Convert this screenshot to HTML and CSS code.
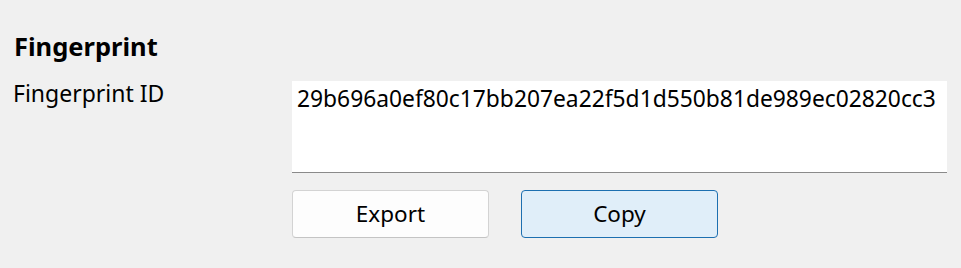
FILE: index.html
```html
<!DOCTYPE html>
<html lang="en">
<head>
    <meta charset="UTF-8">
    <title>Fingerprint</title>
    <link rel="stylesheet" href="styles.css">
</head>
<body>

<div class="panel">
    <div class="section-title">Fingerprint</div>

    <div class="field-row">
        <div class="field-label">Fingerprint ID</div>
        <div class="field-body">
            <div class="id-box">29b696a0ef80c17bb207ea22f5d1d550b81de989ec02820cc3</div>
            <div class="button-row">
                <button class="btn">Export</button>
                <button class="btn btn-accent">Copy</button>
            </div>
        </div>
    </div>
</div>

</body>
</html>
```

FILE: styles.css
```css
body {
    margin: 0;
    padding: 0;
    background-color: #f0f0f0;
    font-family: "Noto Sans", "Open Sans", sans-serif;
    color: #000;
}

.panel {
    padding: 31px 14px 0 13px;
}

.section-title {
    font-size: 25.5px;
    font-weight: bold;
    line-height: 30px;
    padding-left: 1px;
}

.field-row {
    display: flex;
    margin-top: 20px;
}

.field-label {
    width: 279px;
    font-size: 23px;
    line-height: 30px;
    margin-top: -3px;
}

.field-body {
    width: 655px;
}

.id-box {
    height: 92px;
    background-color: #fff;
    border-bottom: 1px solid #8a8a8a;
    padding: 3px 8px 0 5px;
    box-sizing: border-box;
    font-size: 22.8px;
    line-height: 30px;
}

.button-row {
    display: flex;
    gap: 32px;
    margin-top: 17px;
}

.btn {
    width: 197px;
    height: 48px;
    background-color: #fdfdfd;
    border: 1px solid #d3d3d3;
    border-bottom-color: #c4c4c4;
    border-radius: 4px;
    font-family: "Noto Sans", "Open Sans", sans-serif;
    font-size: 22.5px;
    color: #000;
    padding: 0 0 2px 0;
}

.btn-accent {
    background-color: #e0eef9;
    border-color: #1d6fb0;
}
```
